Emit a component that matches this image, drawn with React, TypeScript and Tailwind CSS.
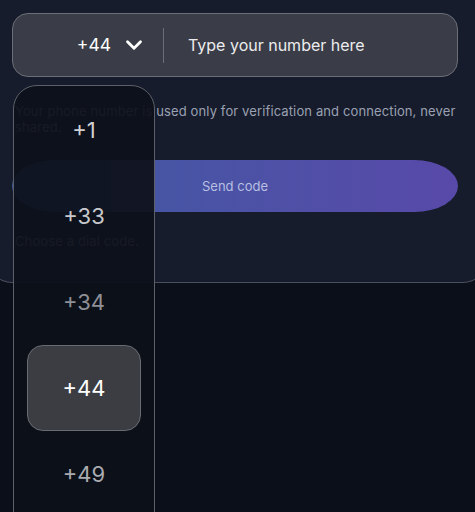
import { ChevronDown } from "lucide-react";

const codes = [
	{ code: "+1", tone: "text-[#cfd0d3]" },
	{ code: "+33", tone: "text-[#c8c9cc]" },
	{ code: "+34", tone: "text-[#8e9096]" },
	{ code: "+44", tone: "text-white", selected: true },
	{ code: "+49", tone: "text-[#a9abb0]" },
];

export default function App() {
	return (
		<div className="relative h-[512px] w-full overflow-hidden bg-[#0b0f19] font-['Inter',sans-serif]">
			{/* Card */}
			<div className="-mx-[12px] rounded-b-3xl border-x border-b border-[#4a4f5c] bg-[#161c2c] pt-[13px] pr-[28px] pb-[33px] pl-[23px]">
				<div className="flex h-[64px] items-center rounded-2xl border border-[#6b6e76] bg-[#3a3d47]">
					<div className="flex w-[150px] items-center justify-end gap-[10px] pr-[16px]">
						<span className="text-[17.5px] text-white">+44</span>
						<ChevronDown className="h-[26px] w-[26px] text-white" strokeWidth={2.6} />
					</div>
					<div className="h-[35px] w-px bg-[#6b6e76]" />
					<span className="pl-[24px] text-[16px] text-[#ececee]">
						Type your number here
					</span>
				</div>

				<p className="mt-[26px] pl-[3px] text-[13px] leading-[16px] tracking-[0.12px] text-[#9ba1b2]">
					Your phone number is used only for verification and connection, never
					shared.
				</p>

				<button className="mt-[25px] flex h-[52px] w-full items-center justify-center rounded-[44px/26px] bg-gradient-to-r from-[#3c5aa2] to-[#5849a9] pt-[2px] text-[13px] text-[#b7bfe2]">
					Send code
				</button>

				<p className="mt-[21px] pl-[3px] text-[13px] leading-[16px] tracking-[0.12px] text-[#9ba1b2]">
					Choose a dial code.
				</p>
			</div>

			{/* Dial code dropdown */}
			<div className="absolute top-[85px] left-[13px] h-[460px] w-[142px] rounded-t-3xl border border-[#5d6068] bg-[#0d101a]/[0.93] pt-[1px]">
				{codes.map((c) => (
					<div
						key={c.code}
						className={
							c.selected
								? "mx-[13px] flex h-[86px] items-center justify-center rounded-2xl border border-[#6a6b70] bg-[#3c3d42]"
								: "flex h-[86px] items-center justify-center"
						}
					>
						<span className={`text-[22px] ${c.tone}`}>{c.code}</span>
					</div>
				))}
			</div>
		</div>
	);
}
